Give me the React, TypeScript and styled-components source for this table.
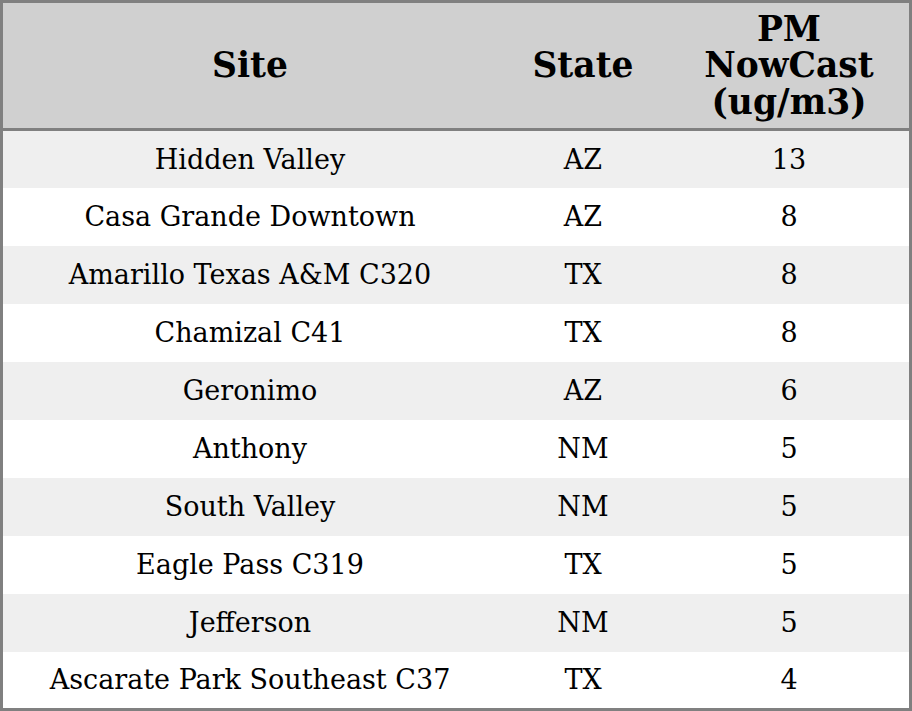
import React from "react";
import styled, { createGlobalStyle } from "styled-components";

const Global = createGlobalStyle`
  html, body { margin: 0; padding: 0; background: #ffffff; }
  body { font-family: "DejaVu Serif", serif; }
`;

const Table = styled.table`
  width: 912px;
  height: 711px;
  border-collapse: collapse;
  border: 3px solid #808080;
  table-layout: fixed;
  font-family: "DejaVu Serif", serif;
  color: #000;
`;

const HeadRow = styled.tr`
  height: 128px;
`;

const HeadCell = styled.th<{ $w: number }>`
  width: ${(p) => p.$w}px;
  background: #d0d0d0;
  font-size: 34.5px;
  font-weight: bold;
  line-height: 36.5px;
  padding: 0;
  text-align: center;
  vertical-align: middle;
  border-bottom: 3px solid #808080;
`;

const Row = styled.tr<{ $odd: boolean }>`
  height: 57.4px;
  background: ${(p) => (p.$odd ? "#efefef" : "#ffffff")};
`;

const Cell = styled.td`
  font-size: 27px;
  line-height: 31px;
  padding: 0;
  text-align: center;
  vertical-align: middle;
`;

const rows: [string, string, string][] = [
  ["Hidden Valley", "AZ", "13"],
  ["Casa Grande Downtown", "AZ", "8"],
  ["Amarillo Texas A&M C320", "TX", "8"],
  ["Chamizal C41", "TX", "8"],
  ["Geronimo", "AZ", "6"],
  ["Anthony", "NM", "5"],
  ["South Valley", "NM", "5"],
  ["Eagle Pass C319", "TX", "5"],
  ["Jefferson", "NM", "5"],
  ["Ascarate Park Southeast C37", "TX", "4"],
];

export default function App() {
  return (
    <>
      <Global />
      <Table>
        <thead>
          <HeadRow>
            <HeadCell $w={494}>Site</HeadCell>
            <HeadCell $w={172}>State</HeadCell>
            <HeadCell $w={240}>
              PM
              <br />
              NowCast
              <br />
              (ug/m3)
            </HeadCell>
          </HeadRow>
        </thead>
        <tbody>
          {rows.map((r, i) => (
            <Row key={i} $odd={i % 2 === 0}>
              <Cell>{r[0]}</Cell>
              <Cell>{r[1]}</Cell>
              <Cell>{r[2]}</Cell>
            </Row>
          ))}
        </tbody>
      </Table>
    </>
  );
}
